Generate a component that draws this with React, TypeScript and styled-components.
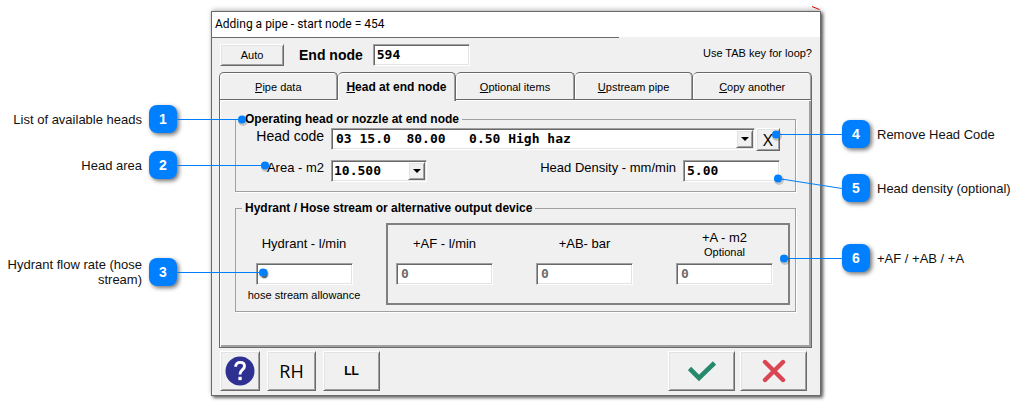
import React from "react";
import styled, { createGlobalStyle, css } from "styled-components";

const face = "#f0f0f0";
const dark = "#696969";
const mid = "#a0a0a0";
const light = "#e3e3e3";
const accent = "#0080ff";

const sans = '"Liberation Sans", Arial, sans-serif';
const mono = '"DejaVu Sans Mono", monospace';

const GlobalStyle = createGlobalStyle`
  *, *::before, *::after { box-sizing: border-box; }
  body { margin: 0; background: #fff; color: #000; font-family: ${sans}; }
  button, input, select { margin: 0; border-radius: 0; color: inherit; }
`;

const raised = css`
  border: 1px solid;
  border-color: #fff ${dark} ${dark} #fff;
  box-shadow: inset 1px 1px ${light}, inset -1px -1px ${mid};
  background: ${face};
`;

const sunken = css`
  border: 1px solid;
  border-color: ${mid} #fff #fff ${mid};
  box-shadow: inset 1px 1px ${dark}, inset -1px -1px ${light};
  background: #fff;
`;

const Figure = styled.main`
  display: grid;
  grid-template-columns: 211px minmax(610px, 1fr) 197px;
  align-items: start;
  padding: 11px 0 10px;
`;

/* Callouts */

const Side = styled.aside<{ $top: number }>`
  display: flex;
  flex-direction: column;
  position: relative;
  z-index: 1;
  padding-top: ${(p) => p.$top}px;
`;

const Callout = styled.div<{ $side: "left" | "right"; $gap?: number }>`
  display: flex;
  flex-direction: ${(p) => (p.$side === "left" ? "row" : "row-reverse")};
  justify-content: flex-end;
  align-items: center;
  gap: 7px;
  min-height: 30px;
  margin-top: ${(p) => p.$gap ?? 0}px;
  padding: ${(p) => (p.$side === "left" ? "0 34px 0 0" : "0 0 0 21px")};
`;

const CalloutText = styled.span`
  font-size: 13px;
  line-height: 15px;
  color: #111;
`;

const LeftText = styled(CalloutText)`
  text-align: right;
`;

const Badge = styled.span`
  display: grid;
  place-items: center;
  position: relative;
  flex: none;
  width: 28px;
  height: 28px;
  border-radius: 8px;
  background: ${accent};
  color: #fff;
  font: bold 14px/16px ${sans};
  box-shadow: 2px 2px 4px rgba(0, 0, 0, 0.55);
`;

const LeaderSvg = styled.svg<{ $side: "left" | "right" }>`
  position: absolute;
  top: 0;
  ${(p) => (p.$side === "left" ? "left: 100%;" : "right: 100%;")}
  overflow: visible;
  pointer-events: none;
`;

function Leader({ side, length, rise = 0 }: { side: "left" | "right"; length: number; rise?: number }) {
  const from = side === "left" ? 0 : length;
  const to = side === "left" ? length : 0;
  return (
    <LeaderSvg $side={side} width={length} height={28} aria-hidden="true">
      <line x1={from} y1={14.5} x2={to} y2={14.5 - rise} stroke={accent} />
      <circle cx={to + 1} cy={16 - rise} r={5} fill="#000" opacity={0.18} />
      <circle cx={to} cy={14.5 - rise} r={4} fill={accent} />
    </LeaderSvg>
  );
}

/* Dialog window */

const Dialog = styled.section`
  position: relative;
  border: 1px solid ${dark};
  background: ${face};
  box-shadow: 2px 2px 3px rgba(0, 0, 0, 0.55), 1px -1px 5px rgba(0, 0, 0, 0.3);
`;

const Scratch = styled.svg`
  position: absolute;
  top: -6px;
  right: 0;
`;

const TitleBar = styled.header`
  padding-left: 3px;
  height: 25px;
  background: #fff;
`;

const Title = styled.h1`
  margin: 0;
  font: 12px/24px Roboto, "Open Sans", sans-serif;
`;

const TitleRule = styled.div`
  width: 67%;
  height: 1px;
  background: ${dark};
`;

const Body = styled.form`
  padding: 6px 8px 0 7px;
`;

const Toolbar = styled.div`
  display: flex;
  align-items: center;
  height: 22px;
  margin-bottom: 6px;
  padding-left: 1px;
`;

const PushButton = styled.button<{ $w: number; $h: number }>`
  ${raised}
  display: grid;
  place-items: center;
  flex: none;
  width: ${(p) => p.$w}px;
  height: ${(p) => p.$h}px;
  padding: 0;
`;

const AutoButton = styled(PushButton)`
  font: 11px/16px ${sans};
`;

const EndNodeLabel = styled.label`
  margin: 0 10px 0 15px;
  font: bold 14px/18px ${sans};
`;

const TextField = styled.input`
  ${sunken}
  width: 97px;
  height: 22px;
  padding: 0 3px 2px;
  font: bold 13px/18px ${mono};
  &:disabled {
    padding-left: 4px;
    color: #6d6d6d;
    background: #fff;
    opacity: 1;
  }
`;

const Hint = styled.span`
  margin-left: auto;
  padding-bottom: 4px;
  font: 11px/16px ${sans};
`;

/* Tabs */

const TabList = styled.div`
  display: grid;
  grid-template-columns: repeat(5, 1fr);
`;

const Tab = styled.button<{ $active?: boolean }>`
  height: 27px;
  padding: 2px 0 0;
  border: 1px solid ${dark};
  border-bottom: 0;
  border-left-width: ${(p) => (p.$active ? 0 : 1)}px;
  border-radius: 5px 5px 0 0;
  background: ${face};
  box-shadow: inset 1px 1px #fff, inset -1px 0 ${mid};
  font: 11px/16px ${sans};
  & + & {
    border-left-width: 0;
  }
  ${(p) =>
    p.$active &&
    css`
      position: relative;
      height: 29px;
      margin-bottom: -2px;
      padding-bottom: 2px;
      font: bold 12px/16px ${sans};
    `}
`;

const Panel = styled.div`
  padding: 11px 15px 35px 15px;
  border: 1px solid ${dark};
  box-shadow: inset 1px 1px #fff, inset -2px -2px ${mid};
`;

const Group = styled.fieldset`
  min-width: 0;
  margin: 0;
  border: 1px solid ${mid};
  box-shadow: 1px 1px #fff;
  & + & {
    margin-top: 8px;
  }
`;

const Legend = styled.legend`
  margin-left: 6px;
  padding: 0 3px;
  font: bold 12px/16px ${sans};
`;

const HeadGroup = styled(Group)`
  display: grid;
  gap: 9px;
  padding: 1px 15px 9px 0;
`;

const FieldRow = styled.div`
  display: flex;
  align-items: flex-start;
`;

const FieldLabel = styled.label<{ $size?: number }>`
  font: ${(p) => p.$size ?? 13}px/16px ${sans};
`;

const LeadLabel = styled(FieldLabel)`
  width: 88px;
  margin-right: 7px;
  text-align: right;
`;

const DensityLabel = styled(FieldLabel)`
  margin: 0 7px 0 auto;
`;

const Combo = styled.div<{ $w?: number }>`
  position: relative;
  flex: ${(p) => (p.$w ? `0 0 ${p.$w}px` : "1")};
`;

const Select = styled.select<{ $inset?: boolean }>`
  ${sunken}
  display: block;
  width: 100%;
  height: 22px;
  padding: 0 20px 0 ${(p) => (p.$inset ? 4 : 2)}px;
  appearance: none;
  font: bold 13px/18px ${mono};
`;

const DropMark = styled.span`
  ${raised}
  display: grid;
  place-items: center;
  position: absolute;
  inset: 2px 2px 2px auto;
  width: 17px;
  pointer-events: none;
  &::after {
    content: "";
    border: 4px solid transparent;
    border-top-color: #000;
    border-bottom: 0;
  }
`;

const RemoveButton = styled(PushButton)`
  margin-left: 1px;
  font: 17px/20px "Open Sans", ${sans};
`;

const HydrantGroup = styled(Group)`
  padding: 7px 5px 6px 0;
`;

const HydrantRow = styled.div`
  display: flex;
  padding-left: 12px;
`;

const HydrantColumn = styled.div`
  display: flex;
  flex-direction: column;
  align-items: center;
  flex: none;
  width: 112px;
  margin-right: 26px;
  padding-top: 2px;
`;

const AltFrame = styled.div`
  display: flex;
  justify-content: space-between;
  flex: 1;
  padding: 0 15px 18px 8px;
  border: 2px solid #808080;
`;

const AltColumn = styled.div`
  display: flex;
  flex-direction: column;
  align-items: center;
  width: 97px;
`;

const MeasureLabel = styled(FieldLabel)`
  display: flex;
  flex-direction: column;
  align-items: center;
  justify-content: center;
  height: 38px;
`;

const SmallText = styled.span`
  font: 11px/12px ${sans};
`;

const Caption = styled.span`
  margin-top: 2px;
  font: 11px/16px ${sans};
  white-space: nowrap;
`;

const Footer = styled.footer`
  display: flex;
  gap: 7px;
  padding: 3px 5px 4px 1px;
`;

const RunButton = styled(PushButton)`
  font: 18px/20px "Open Sans", ${sans};
`;

const LoopButton = styled(PushButton)`
  font: bold 12px/16px ${sans};
`;

const Confirm = styled.div`
  display: flex;
  gap: 5px;
  margin-left: auto;
`;

const tabs = [
  ["P", "ipe data"],
  ["H", "ead at end node"],
  ["O", "ptional items"],
  ["U", "pstream pipe"],
  ["C", "opy another"],
];

export default function App() {
  return (
    <>
      <GlobalStyle />
      <Figure>
        <Side $top={93}>
          <Callout $side="left">
            <LeftText>List of available heads</LeftText>
            <Badge>1<Leader side="left" length={65} /></Badge>
          </Callout>
          <Callout $side="left" $gap={16}>
            <LeftText>Head area</LeftText>
            <Badge>2<Leader side="left" length={88} /></Badge>
          </Callout>
          <Callout $side="left" $gap={77}>
            <LeftText>Hydrant flow rate (hose stream)</LeftText>
            <Badge>3<Leader side="left" length={86} /></Badge>
          </Callout>
        </Side>

        <Dialog aria-label="Adding a pipe">
          <Scratch width="8" height="4" viewBox="0 0 8 4" aria-hidden="true">
            <path d="M0 0.5L7.5 3.5" stroke="#e00000" />
          </Scratch>
          <TitleBar>
            <Title>Adding a pipe - start node = 454</Title>
          </TitleBar>
          <TitleRule />
          <Body onSubmit={(e) => e.preventDefault()}>
            <Toolbar>
              <AutoButton type="button" $w={64} $h={22}>Auto</AutoButton>
              <EndNodeLabel htmlFor="end-node">End node</EndNodeLabel>
              <TextField id="end-node" defaultValue="594" />
              <Hint>Use TAB key for loop?</Hint>
            </Toolbar>

            <TabList role="tablist">
              {tabs.map(([key, rest], i) => (
                <Tab key={rest} type="button" role="tab" aria-selected={i === 1} $active={i === 1}>
                  <u>{key}</u>{rest}
                </Tab>
              ))}
            </TabList>

            <Panel role="tabpanel">
              <HeadGroup>
                <Legend>Operating head or nozzle at end node</Legend>
                <FieldRow>
                  <LeadLabel htmlFor="head-code" $size={14}>Head code</LeadLabel>
                  <Combo>
                    <Select id="head-code" $inset>
                      <option>{"03 15.0\u00a0 80.00\u00a0\u00a0 0.50 High haz"}</option>
                    </Select>
                    <DropMark />
                  </Combo>
                  <RemoveButton type="button" aria-label="Remove head code" $w={24} $h={23}>X</RemoveButton>
                </FieldRow>
                <FieldRow>
                  <LeadLabel htmlFor="area">Area - m2</LeadLabel>
                  <Combo $w={96}>
                    <Select id="area">
                      <option>10.500</option>
                    </Select>
                    <DropMark />
                  </Combo>
                  <DensityLabel htmlFor="density">Head Density - mm/min</DensityLabel>
                  <TextField id="density" defaultValue="5.00" />
                </FieldRow>
              </HeadGroup>

              <HydrantGroup>
                <Legend>Hydrant / Hose stream or alternative output device</Legend>
                <HydrantRow>
                  <HydrantColumn>
                    <MeasureLabel htmlFor="hydrant">Hydrant - l/min</MeasureLabel>
                    <TextField id="hydrant" defaultValue="0" disabled />
                    <Caption>hose stream allowance</Caption>
                  </HydrantColumn>
                  <AltFrame>
                    <AltColumn>
                      <MeasureLabel htmlFor="af">+AF - l/min</MeasureLabel>
                      <TextField id="af" defaultValue="0" disabled />
                    </AltColumn>
                    <AltColumn>
                      <MeasureLabel htmlFor="ab">+AB- bar</MeasureLabel>
                      <TextField id="ab" defaultValue="0" disabled />
                    </AltColumn>
                    <AltColumn>
                      <MeasureLabel htmlFor="a">
                        +A - m2
                        <SmallText>Optional</SmallText>
                      </MeasureLabel>
                      <TextField id="a" defaultValue="0" disabled />
                    </AltColumn>
                  </AltFrame>
                </HydrantRow>
              </HydrantGroup>
            </Panel>

            <Footer>
              <PushButton type="button" aria-label="Help" $w={40} $h={40}>
                <svg width="30" height="30" viewBox="0 0 30 30" fill="none">
                  <circle cx="15" cy="15" r="14.5" fill="#2e3192" />
                  <path d="M10.6 10.8C10.6 7.9 12.6 6.4 15.1 6.4C17.7 6.4 19.5 7.9 19.5 10.2C19.5 13.8 15 13.7 15 18.4" stroke="#fff" strokeWidth="2.9" />
                  <rect x="13.4" y="20.8" width="3.3" height="3.3" fill="#fff" />
                </svg>
              </PushButton>
              <RunButton type="button" $w={49} $h={40}>RH</RunButton>
              <LoopButton type="button" $w={57} $h={40}>LL</LoopButton>
              <Confirm>
                <PushButton type="submit" aria-label="OK" $w={67} $h={40}>
                  <svg width="28" height="22" viewBox="0 0 28 22" fill="none">
                    <path d="M1.5 8.5L11 18L26.5 3" stroke="#27896b" strokeWidth="4.6" />
                  </svg>
                </PushButton>
                <PushButton type="button" aria-label="Cancel" $w={67} $h={40}>
                  <svg width="24" height="24" viewBox="0 0 24 24" fill="none">
                    <path d="M3 3L21 21M21 3L3 21" stroke="#da4453" strokeWidth="4.4" strokeLinecap="round" />
                  </svg>
                </PushButton>
              </Confirm>
            </Footer>
          </Body>
        </Dialog>

        <Side $top={108}>
          <Callout $side="right">
            <CalloutText>Remove Head Code</CalloutText>
            <Badge>4<Leader side="right" length={66} /></Badge>
          </Callout>
          <Callout $side="right" $gap={24}>
            <CalloutText>Head density (optional)</CalloutText>
            <Badge>5<Leader side="right" length={64} rise={10} /></Badge>
          </Callout>
          <Callout $side="right" $gap={40}>
            <CalloutText>+AF / +AB / +A</CalloutText>
            <Badge>6<Leader side="right" length={58} /></Badge>
          </Callout>
        </Side>
      </Figure>
    </>
  );
}
